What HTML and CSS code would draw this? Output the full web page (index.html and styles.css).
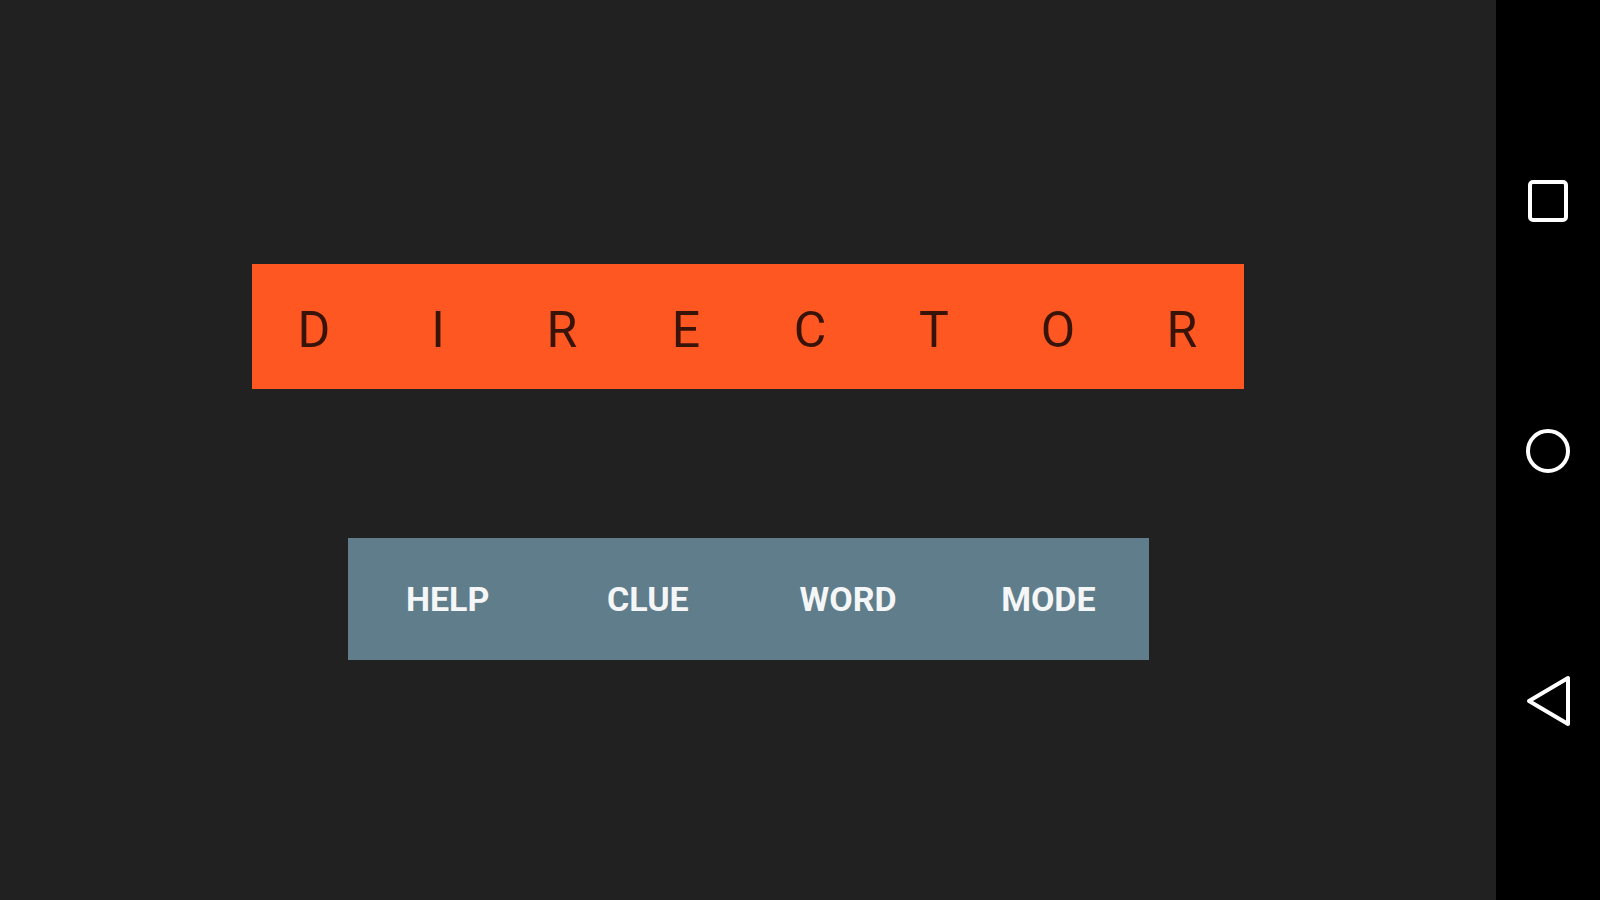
FILE: index.html
```html
<!DOCTYPE html>
<html lang="en">
<head>
    <meta charset="UTF-8">
    <meta name="viewport" content="width=device-width, initial-scale=1.0">
    <title>Director</title>
    <link rel="stylesheet" href="styles.css">
</head>
<body>
    <div class="screen">
        <div class="game">
            <!-- Kata yang ditebak -->
            <div class="word">
                <span class="letter">D</span>
                <span class="letter">I</span>
                <span class="letter">R</span>
                <span class="letter">E</span>
                <span class="letter">C</span>
                <span class="letter">T</span>
                <span class="letter">O</span>
                <span class="letter">R</span>
            </div>

            <div class="menu">
                <button class="menu-btn">HELP</button>
                <button class="menu-btn">CLUE</button>
                <button class="menu-btn">WORD</button>
                <button class="menu-btn">MODE</button>
            </div>
        </div>

        <!-- Tombol navigasi -->
        <div class="navbar">
            <div class="nav-item">
                <svg width="44" height="44" viewBox="0 0 44 44">
                    <rect x="4" y="3" width="36" height="38" rx="3" fill="none" stroke="#fff" stroke-width="4"/>
                </svg>
            </div>
            <div class="nav-item">
                <svg width="48" height="48" viewBox="0 0 48 48">
                    <circle cx="24" cy="24" r="20" fill="none" stroke="#fff" stroke-width="4"/>
                </svg>
            </div>
            <div class="nav-item">
                <svg width="48" height="54" viewBox="0 0 48 54">
                    <polygon points="5,27 44,4 44,50" fill="none" stroke="#fff" stroke-width="4" stroke-linejoin="round"/>
                </svg>
            </div>
        </div>
    </div>
</body>
</html>
```

FILE: styles.css
```css
body {
    margin: 0;
    background-color: #212121;
    font-family: Roboto, "Noto Sans", Arial, sans-serif;
    overflow: hidden;
}
.screen {
    display: flex;
    width: 1600px;
    height: 900px;
}
.game {
    flex: 1;
    display: flex;
    flex-direction: column;
    align-items: center;
    padding-top: 264px;
    gap: 149px;
}
.word {
    display: flex;
    width: 992px;
    height: 125px;
    background: #ff5722;
    align-items: center;
    padding-top: 7px;
    box-sizing: border-box;
}
.letter {
    flex: 1;
    text-align: center;
    font-size: 50px;
    font-weight: 400;
    color: rgba(0, 0, 0, 0.78);
}
.menu {
    display: flex;
    width: 801px;
    height: 122px;
    background: #607d8b;
}
.menu-btn {
    flex: 1;
    background: none;
    border: none;
    color: #f4f6f7;
    font-family: Roboto, "Noto Sans", Arial, sans-serif;
    font-size: 34px;
    font-weight: 700;
    padding: 0;
    cursor: pointer;
}
.navbar {
    width: 104px;
    background: #000;
    display: flex;
    flex-direction: column;
    padding: 76px 0 74px;
    box-sizing: border-box;
}
.nav-item {
    height: 250px;
    display: flex;
    align-items: center;
    justify-content: center;
}
```
